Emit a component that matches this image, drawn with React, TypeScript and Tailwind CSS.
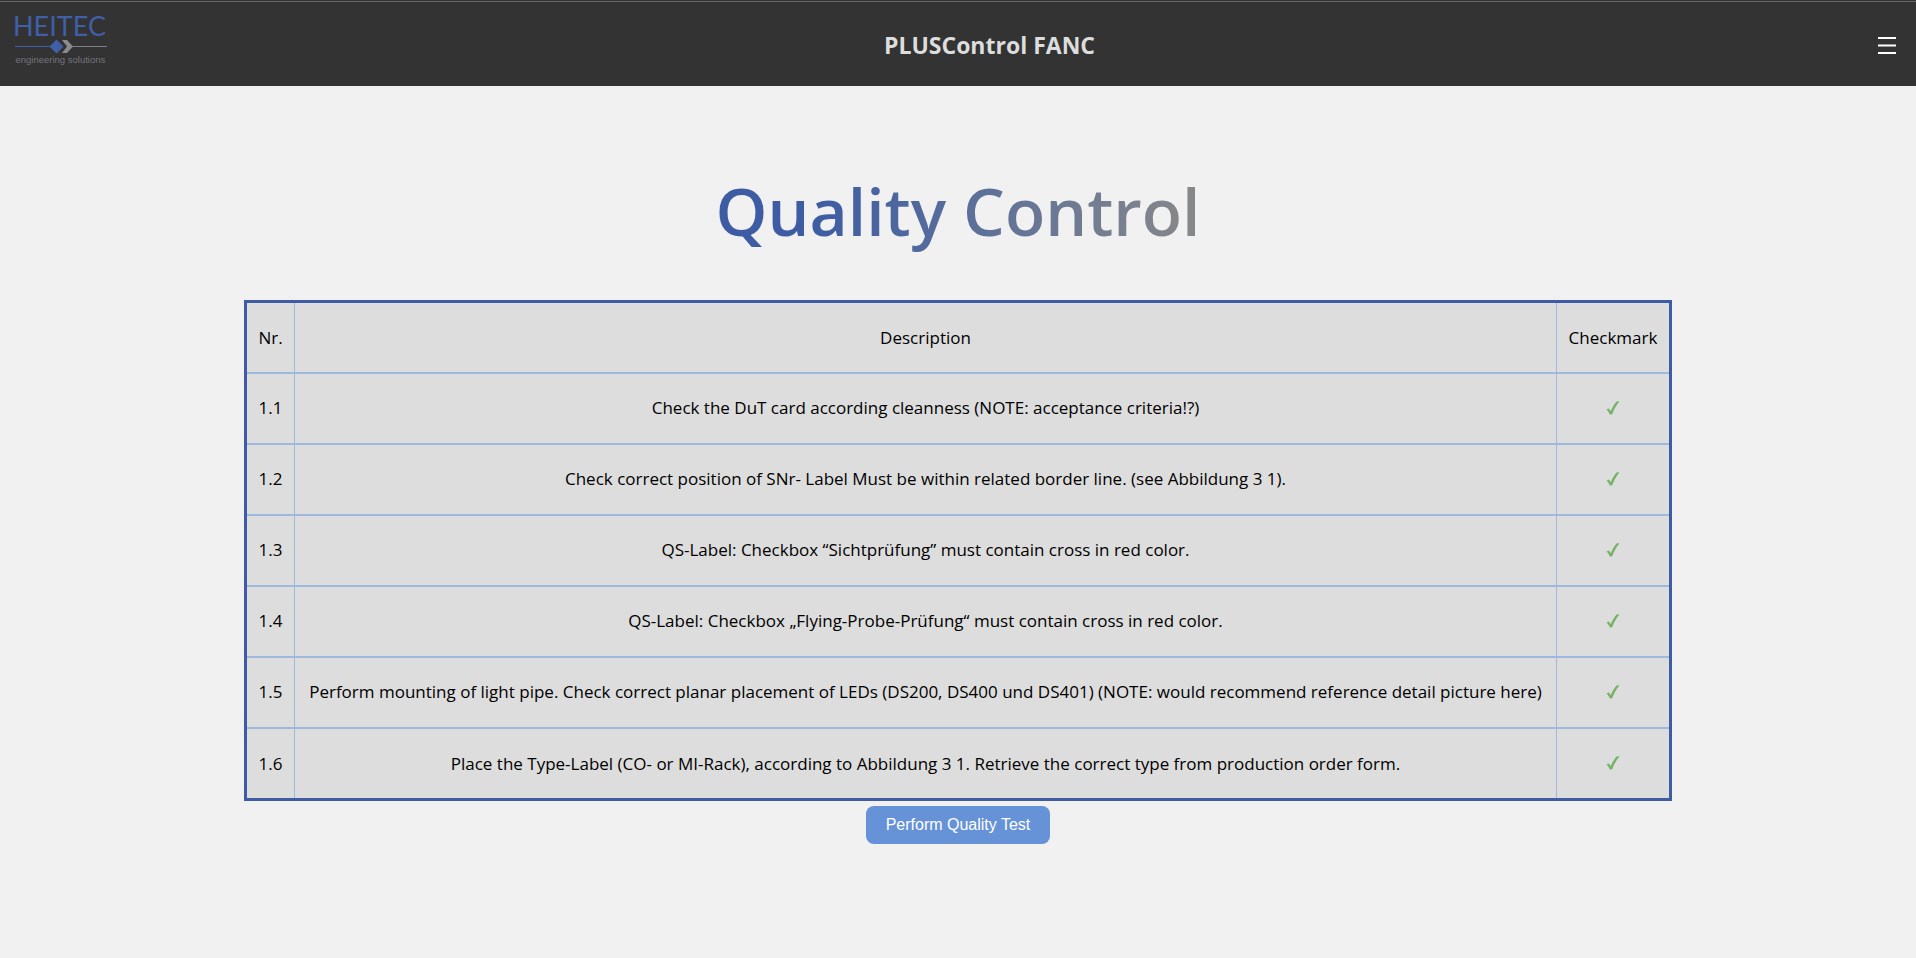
import React from "react";

const checks = [
  { nr: "1.1", text: "Check the DuT card according cleanness (NOTE: acceptance criteria!?)" },
  { nr: "1.2", text: "Check correct position of SNr- Label Must be within related border line. (see Abbildung 3 1)." },
  { nr: "1.3", text: "QS-Label: Checkbox “Sichtprüfung” must contain cross in red color." },
  { nr: "1.4", text: "QS-Label: Checkbox „Flying-Probe-Prüfung“ must contain cross in red color." },
  { nr: "1.5", text: "Perform mounting of light pipe. Check correct planar placement of LEDs (DS200, DS400 und DS401) (NOTE: would recommend reference detail picture here)" },
  { nr: "1.6", text: "Place the Type-Label (CO- or MI-Rack), according to Abbildung 3 1. Retrieve the correct type from production order form." },
];

function Logo() {
  return (
    <svg viewBox="0 0 184 108" className="h-[54px] w-[92px] overflow-visible" role="img" aria-label="HEITEC engineering solutions">
      <text x="-4" y="49" fontSize="54" fill="#3f5fa8" fontFamily="Lato, sans-serif">HEITEC</text>
      <path d="M0 71h72" stroke="#3f5fa8" strokeWidth="2" />
      <path d="M112 71h72" stroke="#808088" strokeWidth="2" />
      <path d="M83 57l14 14-14 14-14-14z" fill="#3f5fa8" />
      <path d="M94 58h10l12 13-12 13h-10l10-13z" fill="#8a8a90" />
      <text x="1" y="103" fontSize="19" fill="#74747c" fontFamily="'Liberation Sans', Arial, sans-serif">engineering solutions</text>
    </svg>
  );
}

function CheckIcon() {
  return (
    <svg viewBox="0 0 14 14" className="mx-auto h-3.5 w-3.5" role="img" aria-label="Checked">
      <path d="M0.5 8.6L2.8 7.4C3.6 8.2 4.2 9.2 4.7 10.2C6.3 6.4 8.4 2.8 10.9 0.2L13.4 0.4C10.4 4 7.8 8.6 6.2 13.2L3.8 13.6C3 11.6 2 9.8 0.5 8.6z" fill="#74b266" />
    </svg>
  );
}

export default function App() {
  return (
    <div className="min-h-screen bg-[#f1f1f1] font-['Open_Sans','Noto_Sans',sans-serif] text-black">
      <header className="border-t border-[#333333] bg-[#333333]">
        <div className="flex h-[85px] items-center justify-between border-t border-[#666666] pr-3.5 pl-[15px]">
          <a href="#" className="-mt-3">
            <Logo />
          </a>
          <span className="pt-0.5 text-[23px] font-bold text-[#dddddd]">PLUSControl FANC</span>
          <button type="button" aria-label="Menu" className="px-1.5 pt-0.5">
            <svg viewBox="0 0 18 17" className="h-[17px] w-[18px]" aria-hidden="true">
              <path d="M0 1h18M0 8.5h18M0 16h18" stroke="#ffffff" strokeWidth="2" />
            </svg>
          </button>
        </div>
      </header>
      <main className="flex flex-col items-center px-61 pt-20">
        <h1 className="bg-linear-to-r from-[#3d5ca3] from-20% to-[#888888] bg-clip-text text-[66px] leading-[88px] font-semibold text-transparent">
          Quality Control
        </h1>
        <table className="mt-[46px] w-full border-collapse border-3 border-[#3d5ca3] bg-[#dddddd] text-center text-[17px]">
          <thead>
            <tr className="h-[71px] border-b-2 border-[#9fb8dd]">
              <th className="w-[49px] font-normal">Nr.</th>
              <th className="border-x border-[#9fb8dd] font-normal">Description</th>
              <th className="w-[114px] font-normal">Checkmark</th>
            </tr>
          </thead>
          <tbody>
            {checks.map((c) => (
              <tr key={c.nr} className="h-[71px] border-b-2 border-[#9fb8dd] last:h-[72px] last:border-b-3 last:border-[#3d5ca3]">
                <td>{c.nr}</td>
                <td className="border-x border-[#9fb8dd]">{c.text}</td>
                <td><CheckIcon /></td>
              </tr>
            ))}
          </tbody>
        </table>
        <button type="button" className="mt-[5px] rounded-lg bg-[#6692d8] px-5 py-[7px] font-['Liberation_Sans',Arial,sans-serif] text-base leading-6 text-white">
          Perform Quality Test
        </button>
      </main>
    </div>
  );
}
